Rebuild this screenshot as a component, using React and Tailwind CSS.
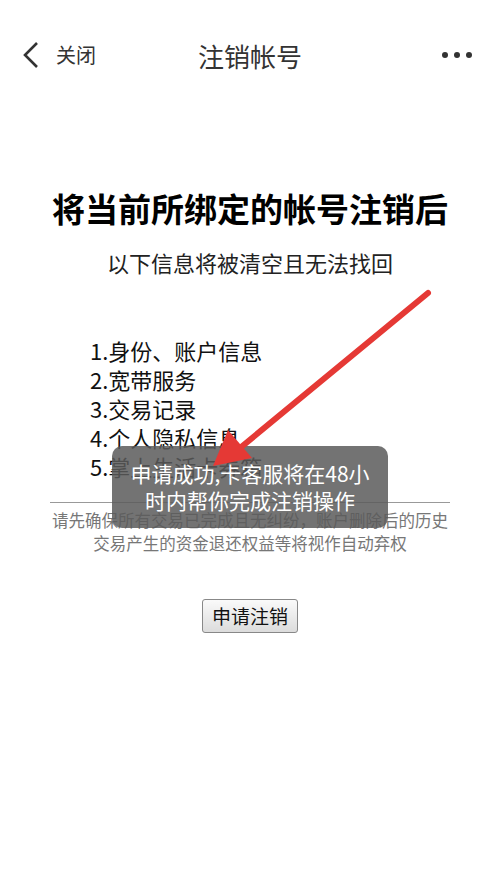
import React from "react";

const items = ["1.身份、账户信息", "2.宽带服务", "3.交易记录", "4.个人隐私信息", "5.掌上生活卡券箱"];

const App = () => {
  return (
    <div
      className="relative w-[500px] h-[889px] bg-white overflow-hidden text-black"
      style={{ fontFamily: '"Noto Sans CJK SC", "Noto Sans", sans-serif' }}
    >
      {/* header */}
      <div className="relative flex items-center h-[56px] mt-[27px] px-[20px]">
        <div className="flex items-center gap-[14px]">
          <svg width="22" height="28" viewBox="0 0 22 28">
            <path d="M17 2 L5 14 L17 26" fill="none" stroke="#333" strokeWidth="2.6" />
          </svg>
          <span className="text-[20px] text-[#333]">关闭</span>
        </div>
        <div className="absolute left-0 right-0 text-center text-[26px] text-[#333] pointer-events-none">
          注销帐号
        </div>
        <div className="ml-auto flex gap-[6px] mr-[8px]">
          <span className="w-[6px] h-[6px] rounded-full bg-[#333]" />
          <span className="w-[6px] h-[6px] rounded-full bg-[#333]" />
          <span className="w-[6px] h-[6px] rounded-full bg-[#333]" />
        </div>
      </div>

      <h1 className="mt-[103px] text-center text-[33px] font-bold leading-[44px]">
        将当前所绑定的帐号注销后
      </h1>
      <p className="mt-[17px] text-center text-[22px] leading-[30px] text-[#222]">以下信息将被清空且无法找回</p>

      <ul className="mt-[59px] pl-[90px] text-[22px] leading-[29px] text-[#111]">
        {items.map((t) => (
          <li key={t}>{t}</li>
        ))}
      </ul>

      <div className="mx-[50px] mt-[21px] border-t border-[#999]" />
      <p className="mt-[6px] px-[50px] text-center text-[16.5px] leading-[23px] text-[#777]">
        请先确保所有交易已完成且无纠纷，账户删除后的历史交易产生的资金退还权益等将视作自动弃权
      </p>

      <div className="flex justify-center mt-[44px]">
        <button className="h-[34px] px-[9px] text-[19px] text-[#111] border border-[#888] rounded-[3px] bg-gradient-to-b from-[#fafafa] to-[#dcdcdc]">
          申请注销
        </button>
      </div>

      {/* toast */}
      <div className="absolute left-[112px] top-[446px] w-[276px] h-[82px] rounded-[10px] bg-[rgba(90,90,90,0.85)] flex flex-col items-center justify-center text-white text-[21px] leading-[27px]">
        <span>申请成功,卡客服将在48小</span>
        <span>时内帮你完成注销操作</span>
      </div>

      {/* red arrow annotation */}
      <svg className="absolute left-0 top-0" width="500" height="889">
        <line x1="428" y1="293" x2="240" y2="448" stroke="#e53935" strokeWidth="6" strokeLinecap="round" />
        <polygon points="213,466 228,430 252,458" fill="#e53935" />
      </svg>
    </div>
  );
};

export default App;
